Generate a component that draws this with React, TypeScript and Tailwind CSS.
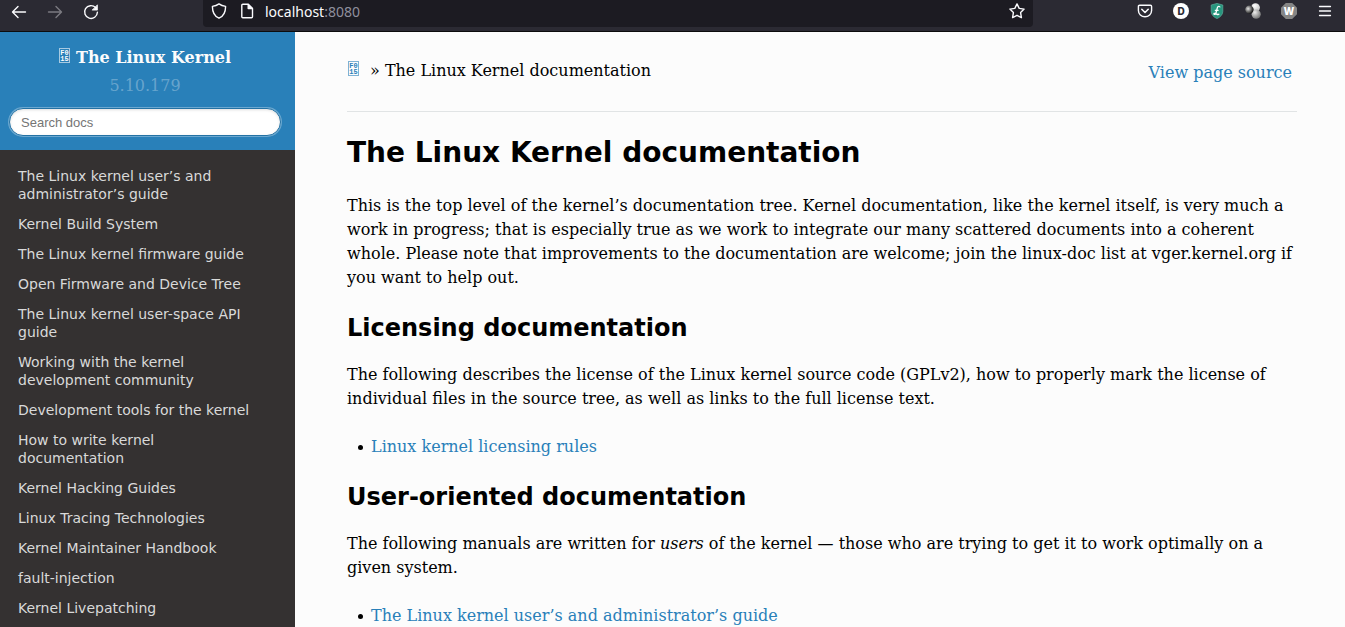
import React from "react";

const guides = [
  "The Linux kernel user’s and administrator’s guide",
  "Kernel Build System",
  "The Linux kernel firmware guide",
  "Open Firmware and Device Tree",
  "The Linux kernel user-space API guide",
  "Working with the kernel development community",
  "Development tools for the kernel",
  "How to write kernel documentation",
  "Kernel Hacking Guides",
  "Linux Tracing Technologies",
  "Kernel Maintainer Handbook",
  "fault-injection",
  "Kernel Livepatching",
];

function Icon({ children }: { children: React.ReactNode }) {
  return (
    <svg
      className="block size-4"
      viewBox="0 0 16 16"
      fill="none"
      stroke="currentColor"
      strokeWidth="1.4"
      strokeLinecap="round"
      strokeLinejoin="round"
      aria-hidden="true"
    >
      {children}
    </svg>
  );
}

function HexBox() {
  return (
    <span
      aria-hidden="true"
      className="flex h-[15px] w-[11px] flex-col items-center justify-center border border-current/60 font-['Liberation_Mono',monospace] text-[7px] leading-[6px] font-bold"
    >
      <span>F0</span>
      <span>15</span>
    </span>
  );
}

function Toolbar() {
  return (
    <header className="flex h-8 items-start border-b border-[#0c0c0d] bg-[#2b2a33] text-[#fbfbfe]">
      <div className="flex w-[203px] shrink-0 gap-5 pt-1 pl-[11px]">
        <button aria-label="Back">
          <Icon>
            <path d="M14.5 8H1.7M7 2.5 1.5 8 7 13.5" />
          </Icon>
        </button>
        <button aria-label="Forward" className="text-[#7b7a81]">
          <Icon>
            <path d="M1.5 8h12.8M9 2.5 14.5 8 9 13.5" />
          </Icon>
        </button>
        <button aria-label="Reload">
          <Icon>
            <path d="M12.6 3.6A6.4 6.4 0 1 0 14.4 8.3" />
            <path d="M14.4 1.2v4.9H9.5z" fill="currentColor" strokeWidth="0.8" />
          </Icon>
        </button>
      </div>
      <div className="flex h-[27px] min-w-0 flex-1 items-start rounded-b bg-[#1c1b22] px-2">
        <button aria-label="Tracking protection" className="pt-[3px]">
          <Icon>
            <path d="M8 .9c1.9 1.4 4.1 2.2 6.6 2.5 0 5.6-1.900 9.700-6.600 11.800C3.300 13.100 1.400 9 1.400 3.400 3.900 3.100 6.100 2.300 8 .9z" />
          </Icon>
        </button>
        <button aria-label="Site information" className="pt-[3px] pl-3">
          <Icon>
            <path d="M3.800 1.200h5.400l4.300 4.300v8.300a1 1 0 0 1-1 1H3.800a1 1 0 0 1-1-1V2.200a1 1 0 0 1 1-1z" />
            <path d="M9.200 1.400v4.100h4.100z" fill="currentColor" />
          </Icon>
        </button>
        <span className="flex-1 truncate pt-0.5 pl-2.5 font-['Noto_Sans',sans-serif] text-sm leading-5">
          localhost<span className="text-[#8f8f9d]">:8080</span>
        </span>
        <button aria-label="Bookmark this page" className="pt-[3px]">
          <Icon>
            <path d="m8 .9 2.200 4.500 4.900.7-3.500 3.500.8 5-4.400-2.300-4.400 2.300.8-5L.9 6.100l4.900-.7z" />
          </Icon>
        </button>
      </div>
      <div className="flex w-[312px] shrink-0 justify-end gap-5 pt-[3px] pr-3">
        <button aria-label="Save to Pocket">
          <Icon>
            <path d="M2.600 2.200h10.800a1.200 1.200 0 0 1 1.200 1.200V7.600a6.600 6.200 0 0 1-13.200 0V3.400a1.200 1.200 0 0 1 1.200-1.200z" />
            <path d="m4.800 6.300 3.200 3.200 3.200-3.200" strokeWidth="1.6" />
          </Icon>
        </button>
        <button
          aria-label="D extension"
          className="flex size-4 items-center justify-center rounded-full bg-white font-['Inter',sans-serif] text-[10px] leading-4 font-extrabold text-[#2b2a33]"
        >
          D
        </button>
        <button aria-label="Shield extension">
          <svg className="block size-4" viewBox="0 0 16 16" aria-hidden="true">
            <path d="M8 .4 13.800 2v6.500c0 3-2.300 5.600-5.800 7.100C4.500 14.100 2.200 11.500 2.200 8.500V2z" fill="#28967e" stroke="#5fae9d" strokeWidth="0.7" />
            <path d="M10.800 4.400c.2-1.400-2-1.500-2.500.4L7 10c-.4 1.500-2 1.800-2.100.9 0-.9 1.700-.6 2.800.2 1 .7 2 .5 2.500-.4M5.800 7.400h3.800" fill="none" stroke="#fff" strokeWidth="1.3" />
          </svg>
        </button>
        <button aria-label="Spheres extension">
          <svg className="block size-4" viewBox="0 0 16 16" aria-hidden="true">
            <defs>
              <radialGradient id="light" cx="0.4" cy="0.3" r="0.7">
                <stop offset="0" stopColor="#fff" />
                <stop offset="1" stopColor="#c4c4c4" />
              </radialGradient>
              <radialGradient id="mid" cx="0.35" cy="0.3" r="0.75">
                <stop offset="0" stopColor="#ededed" />
                <stop offset="1" stopColor="#6f6f6f" />
              </radialGradient>
              <radialGradient id="dark" cx="0.35" cy="0.4" r="0.65">
                <stop offset="0" stopColor="#e6e6e6" />
                <stop offset="0.5" stopColor="#777" />
                <stop offset="1" stopColor="#111" />
              </radialGradient>
            </defs>
            <circle cx="10.5" cy="4.6" r="4.4" fill="url(#light)" />
            <circle cx="11.2" cy="11.2" r="4.6" fill="url(#mid)" />
            <circle cx="4.400" cy="6.600" r="4.200" fill="url(#dark)" />
          </svg>
        </button>
        <button
          aria-label="W extension"
          className="flex size-4 items-center justify-center bg-[#858585] font-['Open_Sans',sans-serif] text-[10px] leading-4 font-extrabold text-white [clip-path:polygon(30%_0,70%_0,100%_30%,100%_70%,70%_100%,30%_100%,0_70%,0_30%)]"
        >
          W
        </button>
        <button aria-label="Open application menu">
          <Icon>
            <path d="M2.500 3.500h11M2.500 8h11M2.500 12.500h11" strokeWidth="1.3" />
          </Icon>
        </button>
      </div>
    </header>
  );
}

function Sidebar() {
  return (
    <aside className="w-[295px] shrink-0 bg-[#343131]">
      <div className="bg-[#2980b9] pt-[14px] pr-[14px] pb-[14px] pl-[9px] text-center">
        <a href="#home" className="flex items-start justify-center gap-1.5 font-bold text-[#fcfcfc]">
          <span className="pt-0.5">
            <HexBox />
          </span>
          <span>The Linux Kernel</span>
        </a>
        <div className="mt-1 text-white/30">5.10.179</div>
        <form role="search" className="mt-2.5">
          <input
            type="text"
            aria-label="Search docs"
            placeholder="Search docs"
            className="block h-7 w-full rounded-full border border-[#2472a4] bg-white px-[11px] font-['Liberation_Sans',sans-serif] text-[13px] text-[#333] shadow-[0_0_0_1px_#6ba8d0,inset_0_1px_3px_#ddd] placeholder:text-[#757575]"
          />
        </form>
      </div>
      <nav aria-label="Documentation" className="pt-[11px]">
        <ul className="font-['DejaVu_Sans',sans-serif] text-sm leading-[18px] text-[#d9d9d9]">
          {guides.map((title) => (
            <li key={title}>
              <a href="#guide" className="block py-1.5 pr-[41px] pl-[18px]">
                {title}
              </a>
            </li>
          ))}
        </ul>
      </nav>
    </aside>
  );
}

function SectionTitle({ children }: { children: React.ReactNode }) {
  return (
    <h2 className="mb-[21px] font-['DejaVu_Sans',sans-serif] text-2xl leading-7 font-bold">
      {children}
    </h2>
  );
}

function LinkList({ children }: { children: React.ReactNode }) {
  return (
    <ul className="mb-6 pl-[11px] last:mb-0">
      <li className="flex gap-2 before:mt-2.5 before:size-[5px] before:rounded-full before:bg-black">
        <a href="#section" className="text-[#2980b9]">
          {children}
        </a>
      </li>
    </ul>
  );
}

export default function App() {
  return (
    <div className="flex min-h-screen flex-col bg-[#fcfcfc] font-['DejaVu_Serif',serif] text-base leading-6 text-black">
      <Toolbar />
      <div className="flex flex-1">
        <Sidebar />
        <main className="min-w-0 flex-1 pt-[27px] pr-12 pl-[52px]">
          <div className="mb-6 flex justify-between border-b border-[#e1e4e5] pb-[26px]">
            <nav aria-label="Breadcrumb" className="flex items-start gap-[11px]">
              <a href="#home" aria-label="Home" className="ml-px pt-0.5 text-[#2980b9]">
                <HexBox />
              </a>
              <span>» The Linux Kernel documentation</span>
            </nav>
            <a href="#source" className="pt-0.5 pr-[5px] text-[#2980b9]">
              View page source
            </a>
          </div>
          <h1 className="mb-[25px] font-['DejaVu_Sans',sans-serif] text-[28px] leading-[33px] font-bold">
            The Linux Kernel documentation
          </h1>
          <p className="mb-6">
            This is the top level of the kernel’s documentation tree. Kernel documentation, like the
            kernel itself, is very much a work in progress; that is especially true as we work to
            integrate our many scattered documents into a coherent whole. Please note that
            improvements to the documentation are welcome; join the linux-doc list at
            vger.kernel.org if you want to help out.
          </p>
          <SectionTitle>Licensing documentation</SectionTitle>
          <p className="mb-6">
            The following describes the license of the Linux kernel source code (GPLv2), how to
            properly mark the license of individual files in the source tree, as well as links to
            the full license text.
          </p>
          <LinkList>Linux kernel licensing rules</LinkList>
          <SectionTitle>User-oriented documentation</SectionTitle>
          <p className="mb-6">
            The following manuals are written for <em>users</em> of the kernel — those who are
            trying to get it to work optimally on a given system.
          </p>
          <LinkList>The Linux kernel user’s and administrator’s guide</LinkList>
        </main>
      </div>
    </div>
  );
}
